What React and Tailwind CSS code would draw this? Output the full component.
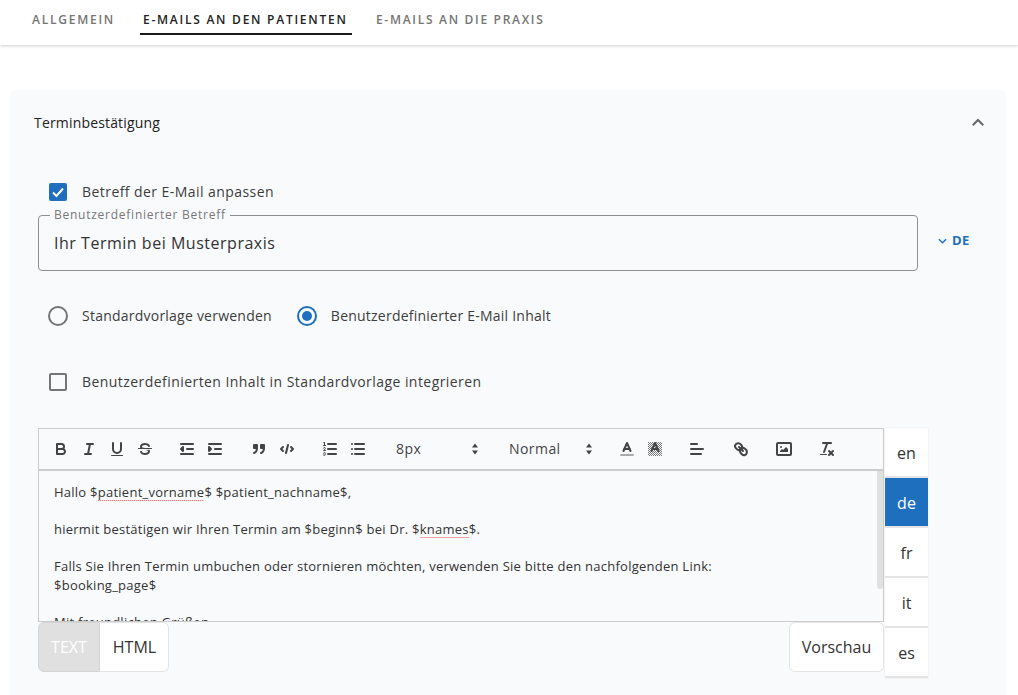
import React from 'react'

const font = { fontFamily: '"Open Sans", sans-serif' }

// toolbar icons, 18x18 viewbox like the quill snow theme
const Ico = ({ children }) => (
    <svg viewBox="0 0 18 18" className="w-[18px] h-[18px] fill-none stroke-[#444] stroke-2 [stroke-linecap:round] [stroke-linejoin:round]">
        {children}
    </svg>
)

const icons = {
    bold: <><path d="M5,4H9.5A2.5,2.5,0,0,1,12,6.5v0A2.5,2.5,0,0,1,9.5,9H5V4Z" /><path d="M5,9h5.5A2.5,2.5,0,0,1,13,11.5v0A2.5,2.5,0,0,1,10.5,14H5V9Z" /></>,
    italic: <><line x1="7" x2="13" y1="4" y2="4" /><line x1="5" x2="11" y1="14" y2="14" /><line x1="8" x2="10" y1="14" y2="4" /></>,
    underline: <><path d="M5,3V9a4,4,0,0,0,4,4H9a4,4,0,0,0,4-4V3" /><rect x="3" y="15" width="12" height="1" rx=".5" className="fill-[#444] stroke-0" /></>,
    strike: <><line x1="15.5" x2="2.5" y1="8.5" y2="8.5" className="stroke-1" /><path className="fill-[#444] stroke-0" d="M9.007,8C6.542,7.791,6,7.519,6,6.5,6,5.792,7.283,5,9,5c1.571,0,2.765.679,2.969,1.309a1,1,0,0,0,1.9-.617C13.356,4.106,11.354,3,9,3,6.2,3,4,4.538,4,6.5a3.2,3.2,0,0,0,.5,1.843Z" /><path className="fill-[#444] stroke-0" d="M8.984,10C11.457,10.208,12,10.479,12,11.5c0,.708-1.283,1.5-3,1.5-1.571,0-2.765-.679-2.969-1.309a1,1,0,1,0-1.9.617C4.644,13.894,6.646,15,9,15c2.8,0,5-1.538,5-3.5a3.2,3.2,0,0,0-.5-1.843Z" /></>,
    outdent: <><line x1="3" x2="15" y1="14" y2="14" /><line x1="3" x2="15" y1="4" y2="4" /><line x1="9" x2="15" y1="9" y2="9" /><polyline points="5 7 5 11 3 9 5 7" className="fill-[#444]" /></>,
    indent: <><line x1="3" x2="15" y1="14" y2="14" /><line x1="3" x2="15" y1="4" y2="4" /><line x1="9" x2="15" y1="9" y2="9" /><polyline points="3 7 3 11 5 9 3 7" className="fill-[#444]" /></>,
    quote: <><rect x="4" y="5" width="3" height="3" className="fill-[#444]" /><rect x="11" y="5" width="3" height="3" className="fill-[#444]" /><path d="M7,8c0,4.031-3,5-3,5" /><path d="M14,8c0,4.031-3,5-3,5" /></>,
    code: <><polyline points="5 7 3 9 5 11" /><polyline points="13 7 15 9 13 11" /><line x1="10" x2="8" y1="5" y2="13" /></>,
    ol: <><line x1="7" x2="15" y1="4" y2="4" /><line x1="7" x2="15" y1="9" y2="9" /><line x1="7" x2="15" y1="14" y2="14" /><line x1="2.5" x2="4.5" y1="5.5" y2="5.5" className="stroke-1" /><path className="fill-[#444] stroke-0" d="M3.5,6A0.5,0.5,0,0,1,3,5.5V3.085l-0.276.138A0.5,0.5,0,0,1,2.053,3c-0.124-.247-0.023-0.324.224-0.447l1-.5A0.5,0.5,0,0,1,4,2.5v3A0.5,0.5,0,0,1,3.5,6Z" /><path className="stroke-1" d="M4.5,10.5h-2c0-.234,1.85-1.076,1.85-2.234A0.959,0.959,0,0,0,2.5,8.156" /><path className="stroke-1" d="M2.5,14.846a0.959,0.959,0,0,0,1.85-.109A0.7,0.7,0,0,0,3.75,14a0.688,0.688,0,0,0,.6-0.736,0.959,0.959,0,0,0-1.85-.109" /></>,
    ul: <><line x1="6" x2="15" y1="4" y2="4" /><line x1="6" x2="15" y1="9" y2="9" /><line x1="6" x2="15" y1="14" y2="14" /><line x1="3" x2="3" y1="4" y2="4" /><line x1="3" x2="3" y1="9" y2="9" /><line x1="3" x2="3" y1="14" y2="14" /></>,
    color: <><line x1="3" x2="15" y1="15" y2="15" className="stroke-[#aaa]" /><polyline points="5.5 11 9 3 12.5 11" /><line x1="11.63" x2="6.38" y1="9" y2="9" /></>,
    background: <><pattern id="dots" width="2" height="2" patternUnits="userSpaceOnUse"><rect width="1" height="1" fill="#777" stroke="none" /><rect x="1" y="1" width="1" height="1" fill="#777" stroke="none" /></pattern><rect x="2" y="2" width="14" height="14" fill="url(#dots)" stroke="none" /><polyline points="5.5 11 9 3 12.5 11" /><line x1="11.63" x2="6.38" y1="9" y2="9" /></>,
    align: <><line x1="3" x2="15" y1="9" y2="9" /><line x1="3" x2="13" y1="14" y2="14" /><line x1="3" x2="9" y1="4" y2="4" /></>,
    link: <><line x1="7" x2="11" y1="7" y2="11" /><path d="M8.9,4.577a3.476,3.476,0,0,1,.36,4.679A3.476,3.476,0,0,1,4.577,8.9C3.185,7.5,2.4,6.537,3.151,5.192A3.476,3.476,0,0,1,8.9,4.577Z" /><path d="M13.423,9.1a3.476,3.476,0,0,0-4.679-.36,3.476,3.476,0,0,0,.36,4.679c1.392,1.392,2.5,2.4,3.669,1.751A3.476,3.476,0,0,0,13.423,9.1Z" /></>,
    image: <><rect x="2" y="3" width="14" height="12" rx="1" /><circle cx="6" cy="7" r="1" className="fill-[#444] stroke-0" /><polyline points="5 12 5 11 7 9 8 10 11 7 13 9 13 12 5 12" className="fill-[#444] stroke-0" /></>,
    clean: <><line x1="5" x2="13" y1="3" y2="3" /><line x1="6" x2="9.35" y1="12" y2="3" /><line x1="11" x2="15" y1="11" y2="15" /><line x1="15" x2="11" y1="11" y2="15" /><rect x="2" y="14" width="7" height="1" rx=".5" className="fill-[#444] stroke-0" /></>,
}

const Btn = ({ name, className = '' }) => (
    <button className={`w-7 h-6 flex items-center justify-center ${className}`}>
        <Ico>{icons[name]}</Ico>
    </button>
)

const Picker = ({ label, className }) => (
    <div className={`flex items-center justify-between text-sm tracking-[0.44px] text-[#444] ${className}`}>
        <span>{label}</span>
        <svg viewBox="0 0 8 14" className="w-2 h-3.5 fill-[#444]">
            <path d="M4 1.5 7 5.5H1Z" />
            <path d="M4 12.5 1 8.5H7Z" />
        </svg>
    </div>
)

const Misspelled = ({ children }) => (
    <span className="bg-[linear-gradient(to_right,#e5484d_50%,transparent_50%)] bg-[length:2px_1px] bg-bottom bg-repeat-x">{children}</span>
)

const languages = ['en', 'de', 'fr', 'it', 'es']

export default function App() {
    return (
        <div className="h-screen overflow-hidden bg-white" style={font}>
            <div className="h-[45px] flex pl-[32px] gap-[25px] shadow-[0_1px_3px_rgba(0,0,0,0.2)] text-xs font-semibold uppercase tracking-[1.75px] text-[#757575]">
                <div className="pt-[12px]">Allgemein</div>
                <div className="w-[212px] h-[35px] pt-[12px] px-[3px] border-b-2 border-[#1a1a1a] text-[#222]">E-Mails an den Patienten</div>
                <div className="pt-[12px] -ml-[1px] tracking-[1.7px]">E-Mails an die Praxis</div>
            </div>

            <div className="mt-[45px] mx-[10px] w-[996px] h-[640px] rounded-md bg-[#f9fafc]">
                <div className="h-[66px] pl-[24px] pr-[19px] flex items-center justify-between">
                    <span className="text-sm tracking-[0.17px] font-medium text-[#222]">Terminbestätigung</span>
                    <svg viewBox="0 0 24 24" className="w-[18px] h-[18px] fill-none stroke-[#666] stroke-[2.6]">
                        <polyline points="5 15 12 8 19 15" />
                    </svg>
                </div>

                <div className="pl-[28px] pt-[26px]">
                    <div className="flex items-center h-5 pl-[11px] gap-[15px] text-sm tracking-[0.44px] text-[#3d3d3d]">
                        <span className="w-[18px] h-[18px] rounded-[2px] bg-[#1f6fbf] flex items-center justify-center">
                            <svg viewBox="0 0 18 18" className="w-[18px] h-[18px] fill-none stroke-white stroke-2">
                                <polyline points="4 9.5 7.5 13 14 5.5" />
                            </svg>
                        </span>
                        Betreff der E-Mail anpassen
                    </div>

                    <div className="flex items-start mt-[5px]">
                        <fieldset className="w-[880px] h-[64px] border border-[#8f8f8f] rounded px-[11px]">
                            <legend className="px-[4px] text-xs tracking-[0.75px] leading-[16px] text-[#777]">Benutzerdefinierter Betreff</legend>
                            <div className="pl-[4px] text-base leading-[24px] mt-[8px] tracking-[0.52px] text-[#333]">Ihr Termin bei Musterpraxis</div>
                        </fieldset>
                        <div className="ml-[20px] mt-[24px] flex items-center gap-[5px] text-[13px] tracking-[0.5px] font-bold text-[#1f6fbf]">
                            <svg viewBox="0 0 10 6" className="w-[9px] h-[6px] fill-none stroke-[#1f6fbf] stroke-[1.6]">
                                <polyline points="1 1 5 5 9 1" />
                            </svg>
                            DE
                        </div>
                    </div>

                    <div className="flex items-center h-5 mt-[35px] pl-[10px] text-sm tracking-[0.23px] text-[#3d3d3d]">
                        <span className="w-5 h-5 rounded-full border-2 border-[#757575]"></span>
                        <span className="ml-[14px]">Standardvorlage verwenden</span>
                        <span className="ml-[25px] w-5 h-5 rounded-full border-2 border-[#1f6fbf] flex items-center justify-center">
                            <span className="w-2.5 h-2.5 rounded-full bg-[#1f6fbf]"></span>
                        </span>
                        <span className="ml-[14px]">Benutzerdefinierter E-Mail Inhalt</span>
                    </div>

                    <div className="flex items-center h-5 mt-[46px] pl-[11px] gap-[15px] text-sm tracking-[0.44px] text-[#3d3d3d]">
                        <span className="w-[18px] h-[18px] rounded-[2px] border-2 border-[#757575]"></span>
                        Benutzerdefinierten Inhalt in Standardvorlage integrieren
                    </div>

                    <div className="flex mt-[36px]">
                        <div className="w-[846px]">
                            <div className="h-[43px] flex items-center pl-[8px] border border-[#ccc] border-b-2">
                                <Btn name="bold" />
                                <Btn name="italic" />
                                <Btn name="underline" />
                                <Btn name="strike" />
                                <Btn name="outdent" className="ml-[14px]" />
                                <Btn name="indent" />
                                <Btn name="quote" className="ml-[16px]" />
                                <Btn name="code" />
                                <Btn name="ol" className="ml-[15px]" />
                                <Btn name="ul" />
                                <Picker label="8px" className="w-[83px] ml-[24px]" />
                                <Picker label="Normal" className="w-[84px] ml-[30px]" />
                                <Btn name="color" className="ml-[20px]" />
                                <Btn name="background" />
                                <Btn name="align" className="ml-[14px]" />
                                <Btn name="link" className="ml-[16px]" />
                                <Btn name="image" className="ml-[15px]" />
                                <Btn name="clean" className="ml-[15px]" />
                            </div>
                            <div className="relative h-[151px] overflow-hidden border border-t-0 border-[#ccc] pl-[15px] pt-[12px] text-[13px] tracking-[0.25px] leading-[18.5px] text-[#333]">
                                <p>Hallo $<Misspelled>patient_vorname</Misspelled>$ $patient_nachname$,</p>
                                <p className="mt-[18.5px]">hiermit bestätigen wir Ihren Termin am $beginn$ bei Dr. $<Misspelled>knames</Misspelled>$.</p>
                                <p className="mt-[18.5px]">Falls Sie Ihren Termin umbuchen oder stornieren möchten, verwenden Sie bitte den nachfolgenden Link:</p>
                                <p>$booking_page$</p>
                                <p className="mt-[18.5px]">Mit freundlichen Grüßen</p>
                                <div className="absolute right-0 top-0 w-[6px] h-[118px] rounded-b-sm bg-[#dfe0e0]"></div>
                            </div>
                            <div className="flex justify-between text-base text-[#333]">
                                <div className="flex h-[50px]">
                                    <button className="w-[62px] rounded-l-md border border-[#d4d4d4] bg-[#e0e0e0] text-white">TEXT</button>
                                    <button className="w-[69px] pl-[1px] rounded-r-md border border-l-0 border-[#e4e4e4] bg-white">HTML</button>
                                </div>
                                <button className="w-[95px] h-[50px] rounded-md border border-[#e4e4e4] bg-white">Vorschau</button>
                            </div>
                        </div>
                        <div className="w-[43px] ml-[1px] shadow-[0_0_1px_rgba(0,0,0,0.15)] self-start">
                            {languages.map((lang) => (
                                <div
                                    key={lang}
                                    className={`h-[50px] pt-[2px] flex items-center justify-center text-base border-b-2 border-[#e4e4e4] ${lang === 'de' ? 'bg-[#1f6fbf] text-white border-[#1f6fbf]' : 'bg-white text-[#333]'}`}
                                >
                                    {lang}
                                </div>
                            ))}
                        </div>
                    </div>
                </div>
            </div>
        </div>
    )
}
